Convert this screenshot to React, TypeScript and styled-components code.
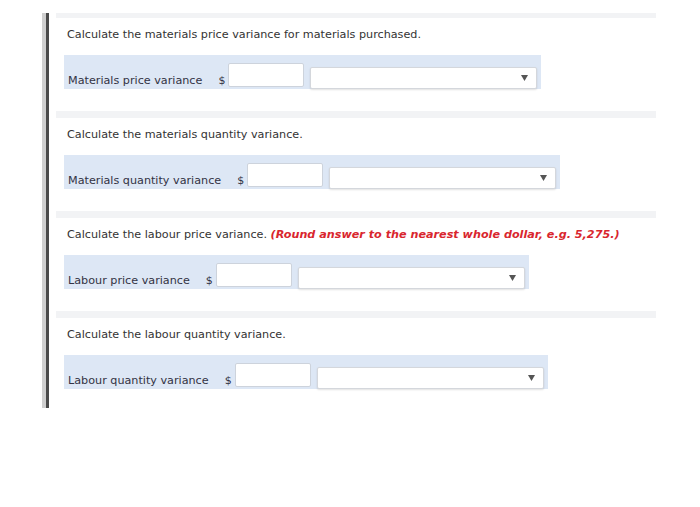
import React from "react";
import styled, { createGlobalStyle } from "styled-components";

const GlobalStyle = createGlobalStyle`
  html, body {
    margin: 0;
    padding: 0;
    background: #ffffff;
  }
  body {
    font-family: "DejaVu Sans", Verdana, sans-serif;
  }
`;

const Page = styled.div`
  width: 700px;
  height: 507px;
  padding-top: 13px;
  box-sizing: border-box;
`;

const Frame = styled.div`
  margin-left: 42px;
  width: 610px;
  border-left: 4px solid #cfcfcf;
`;

const Inner = styled.div`
  border-left: 3px solid #4a4a4a;
  display: flex;
  flex-direction: column;
`;

const Section = styled.div<{ $first?: boolean; $last?: boolean }>`
  margin-left: 7px;
  border-top: ${(p) => (p.$first ? 5 : 7)}px solid #f2f3f5;
  padding: 10px 0 ${(p) => (p.$last ? 19 : 22)}px 8px;
  display: flex;
  flex-direction: column;
  align-items: flex-start;
`;

const Title = styled.div`
  padding-left: 3px;
  font-size: 11.2px;
  line-height: 14px;
  color: #333333;
  margin-bottom: 13px;
  white-space: nowrap;
`;

const Hint = styled.span`
  color: #d9262e;
  font-weight: bold;
  font-style: italic;
`;

const AnswerRow = styled.div`
  display: flex;
  align-items: flex-end;
  height: 34px;
  box-sizing: border-box;
  padding: 8px 4px 0 4px;
  background: #dde7f5;
`;

const Label = styled.span`
  font-size: 11.2px;
  line-height: 14px;
  color: #333344;
  margin-bottom: 1px;
  white-space: nowrap;
`;

const Dollar = styled.span`
  font-size: 11px;
  line-height: 14px;
  color: #333344;
  margin: 0 3px 1px 16px;
`;

const AmountInput = styled.input`
  width: 76px;
  height: 24px;
  box-sizing: border-box;
  margin: 0 6px 2px 0;
  padding: 0 4px;
  border: 1px solid #cdd3dc;
  border-radius: 2px;
  background: #ffffff;
  outline: none;
  font-family: inherit;
`;

const Dropdown = styled.div`
  width: 227px;
  height: 22px;
  box-sizing: border-box;
  border: 1px solid #d4d7dc;
  border-radius: 2px;
  background: #ffffff;
  box-shadow: 0 1px 2px rgba(0, 0, 0, 0.12);
  display: flex;
  align-items: center;
  justify-content: flex-end;
  padding-right: 8px;
`;

const Arrow = () => (
  <svg width="7" height="6" viewBox="0 0 7 6">
    <path d="M0 0 H7 L3.5 6 Z" fill="#555555" />
  </svg>
);

type Question = {
  title: string;
  hint?: string;
  label: string;
};

const questions: Question[] = [
  {
    title: "Calculate the materials price variance for materials purchased.",
    label: "Materials price variance",
  },
  {
    title: "Calculate the materials quantity variance.",
    label: "Materials quantity variance",
  },
  {
    title: "Calculate the labour price variance.",
    hint: "(Round answer to the nearest whole dollar, e.g. 5,275.)",
    label: "Labour price variance",
  },
  {
    title: "Calculate the labour quantity variance.",
    label: "Labour quantity variance",
  },
];

function App() {
  return (
    <Page>
      <GlobalStyle />
      <Frame>
        <Inner>
          {questions.map((q, i) => (
            <Section
              key={q.label}
              $first={i === 0}
              $last={i === questions.length - 1}
            >
              <Title>
                {q.title}
                {q.hint && (
                  <>
                    {" "}
                    <Hint>{q.hint}</Hint>
                  </>
                )}
              </Title>
              <AnswerRow>
                <Label>{q.label}</Label>
                <Dollar>$</Dollar>
                <AmountInput type="text" />
                <Dropdown>
                  <Arrow />
                </Dropdown>
              </AnswerRow>
            </Section>
          ))}
        </Inner>
      </Frame>
    </Page>
  );
}

export default App;
